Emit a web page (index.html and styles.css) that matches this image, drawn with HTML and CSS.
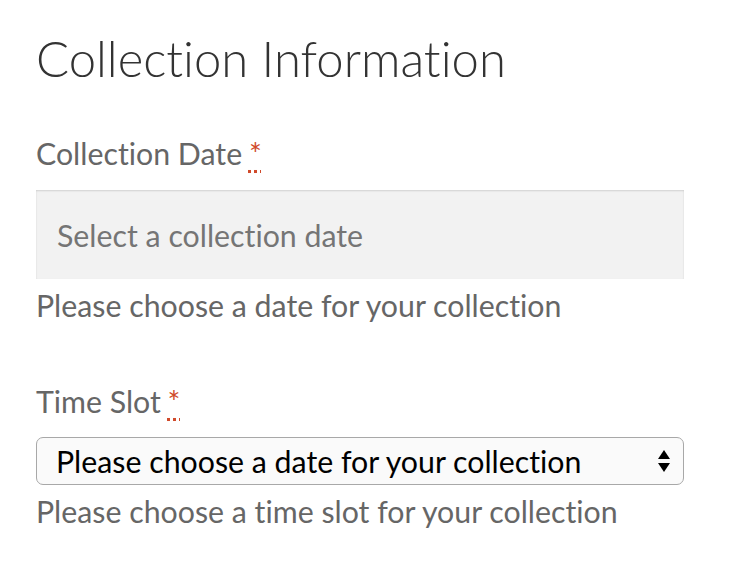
FILE: index.html
```html
<!DOCTYPE html>
<html>
<head>
<meta charset="utf-8">
<link rel="stylesheet" href="styles.css">
</head>
<body>
<div class="form">
  <h3 class="title">Collection Information</h3>
  <div class="field">
    <label class="label">Collection Date <abbr class="req" title="required">*</abbr></label>
    <div class="date-input">Select a collection date</div>
    <div class="help">Please choose a date for your collection</div>
  </div>
  <div class="field field-time">
    <label class="label">Time Slot <abbr class="req" title="required">*</abbr></label>
    <div class="select">
      <span class="select-text">Please choose a date for your collection</span>
      <svg class="arrows" width="12" height="22" viewBox="0 0 12 22"><path d="M6 0 L12 9 L0 9 Z" fill="#000"/><path d="M6 22 L12 13 L0 13 Z" fill="#000"/></svg>
    </div>
    <div class="help">Please choose a time slot for your collection</div>
  </div>
</div>
</body>
</html>
```
FILE: styles.css
```css
html, body { margin: 0; padding: 0; background: #fff; }
body { font-family: Lato, "Open Sans", sans-serif; font-variant-ligatures: none; }
.form { padding: 28px 54px 0 36px; }
.title { margin: 0; font-size: 49px; font-weight: 300; color: #333; line-height: 60px; }
.field { margin-top: 47px; display: flex; flex-direction: column; }
.field-time { margin-top: 60px; }
.label { font-size: 30.3px; color: #666; line-height: 36px; }
.req { color: #d04a2b; text-decoration: underline dotted; text-underline-offset: 5px; border: 0; margin-left: -1px; }
.date-input { margin-top: 19px; height: 89px; background: #f2f2f2; box-shadow: inset 0 1px 2px rgba(0,0,0,0.14); display: flex; align-items: center; padding-left: 21px; font-size: 30.3px; color: #757575; }
.help { font-size: 30.3px; color: #666; line-height: 36px; margin-top: 8px; }
.select { margin-top: 18px; height: 46px; border: 1px solid #a8a8a8; border-radius: 7px; background: #fafafa; display: flex; align-items: center; justify-content: space-between; padding: 0 13px 0 19px; font-size: 30.3px; color: #000; }
```
